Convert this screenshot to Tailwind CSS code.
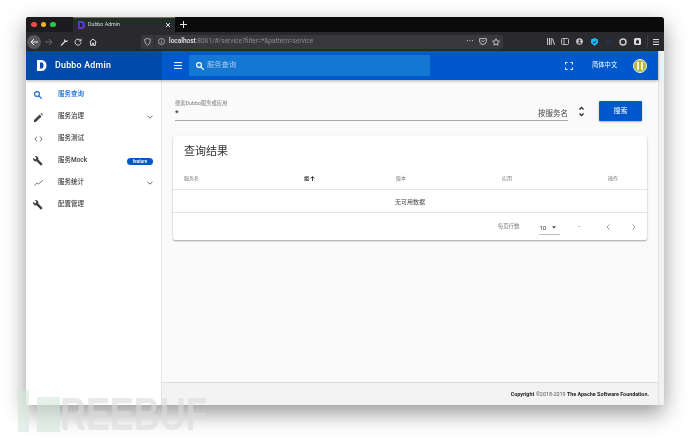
<!DOCTYPE html>
<html lang="zh">
<head>
<meta charset="utf-8">
<script src="https://cdn.jsdelivr.net/npm/@tailwindcss/browser@4"></script>
</head>
<body class="relative w-[690px] h-[439px] overflow-hidden bg-white font-['Roboto','Noto_Sans_CJK_SC',sans-serif]">
<!-- watermark -->
<div class="absolute left-[18px] top-[390px] flex items-start z-20 opacity-60">
  <div class="w-[11px] h-[42px] bg-[#d3e8dc]"></div>
  <div class="ml-[8px] mt-[7px] w-[23px] h-[35px] bg-[#d3e8dc]"></div>
  <div class="text-[46px] leading-[36px] mt-[6px] font-bold scale-x-[0.78] origin-left text-[#dcdcdc] font-['Liberation_Sans',sans-serif]">REEBUF</div>
</div>
<div class="pt-[17px] pl-[26px]">
<div class="relative z-10 w-[638px] h-[388px] flex flex-col overflow-hidden rounded-t-[3px] rounded-b-[2px] shadow-[0_8px_22px_rgba(0,0,0,0.42)] bg-[#f5f5f5] blur-[0.3px]">
  <!-- tab bar -->
  <div class="h-[15px] shrink-0 bg-[#0b0b0c] flex items-stretch">
    <div class="w-[47px] flex items-center gap-[4px] pl-[5px] bg-[#1c1c1e]">
      <span class="w-[5.5px] h-[5.5px] rounded-full bg-[#f0484a]"></span>
      <span class="w-[5.5px] h-[5.5px] rounded-full bg-[#f2b428]"></span>
      <span class="w-[5.5px] h-[5.5px] rounded-full bg-[#2fc53f]"></span>
    </div>
    <div class="w-[102px] bg-[#2a2a2e] border-t border-[#2f7fe0] flex items-center pl-[5px] text-white">
      <svg width="7" height="8" viewBox="0 0 7 8"><path d="M0 0h4a3 4 0 0 1 0 8H0z" fill="#5b35d5"/><path d="M2 2h1.500a1 2 0 0 1 0 4H2z" fill="#1f1f2a"/></svg>
      <span class="ml-[3px] text-[5.3px] leading-none text-[#d8d8d8]">Dubbo Admin</span>
      <svg class="ml-auto mr-[4px]" width="6" height="6" viewBox="0 0 6 6"><path d="M1 1l4 4M5 1L1 5" stroke="#e6e6e6" stroke-width="1"/></svg>
    </div>
    <svg class="ml-[5px] self-center" width="7" height="7" viewBox="0 0 7 7"><path d="M3.500 0v7M0 3.500h7" stroke="#e6e6e6" stroke-width="1"/></svg>
  </div>
  <!-- toolbar -->
  <div class="h-[19px] shrink-0 bg-[#2a2a2e] flex items-center">
    <div class="ml-[1px] w-[14px] h-[14px] rounded-full bg-[#59595c] flex items-center justify-center">
      <svg width="8" height="8" viewBox="0 0 8 8" fill="none" stroke="#eee" stroke-width="1"><path d="M8 4H1M4 1L1 4l3 3"/></svg>
    </div>
    <svg class="ml-[4px]" width="8" height="8" viewBox="0 0 8 8" fill="none" stroke="#6b6b6e" stroke-width="1"><path d="M0 4h7M4 1l3 3-3 3"/></svg>
    <svg class="ml-[7px]" width="8" height="8" viewBox="0 0 8 8" fill="none" stroke="#ddd" stroke-width="1.200"><path d="M1 7.500L5 3.500M4.500 1.500a1.800 1.800 0 0 0 2 2L7.500 2.500"/></svg>
    <svg class="ml-[6px]" width="8" height="8" viewBox="0 0 8 8" fill="none" stroke="#ddd" stroke-width="1"><path d="M6.600 2.600A3 3 0 1 0 7 4.500M7 .8v2.200H4.800"/></svg>
    <svg class="ml-[7px]" width="8" height="8" viewBox="0 0 8 8" fill="none" stroke="#ddd" stroke-width="1"><path d="M.6 4L4 1l3.400 3M1.600 3.600V7.400h1.800V5.200h1.200v2.200h1.800V3.600"/></svg>
    <div class="ml-[44px] w-[362px] h-[14px] rounded-[2px] bg-[#38383d] flex items-center pl-[3px] pr-[3px] text-[6.5px] leading-none">
      <svg width="7" height="8" viewBox="0 0 7 8" fill="none" stroke="#bbb" stroke-width="0.900"><path d="M.7 1.200L3.500.5l2.800.7c0 3-.8 5-2.800 6.200C1.500 6.200.7 4.200.7 1.200z"/></svg>
      <span class="w-px h-[14px] bg-[#2a2a2e] ml-[3px]"></span>
      <svg class="ml-[3px]" width="7" height="7" viewBox="0 0 7 7" fill="none" stroke="#bbb" stroke-width="0.800"><circle cx="3.500" cy="3.500" r="3"/><path d="M3.500 3v2.200M3.500 1.600v.7"/></svg>
      <span class="ml-[4px] text-[#e8e8e8] font-medium">localhost</span><span class="text-[#8d8d90]">:8081/#/service?filter=*&amp;pattern=service</span>
      <span class="ml-auto text-[#ccc] text-[7px] tracking-[0.5px] font-bold mr-[5px]">···</span>
      <svg width="8" height="7" viewBox="0 0 8 7" fill="none" stroke="#ccc" stroke-width="0.900"><path d="M.6.600h6.800v2.500a3.400 3.400 0 0 1-6.800 0zM2.500 2.500L4 3.800l1.500-1.300"/></svg>
      <svg class="ml-[5px]" width="8" height="8" viewBox="0 0 8 8" fill="none" stroke="#ccc" stroke-width="0.900"><path d="M4 .7l1 2.200 2.400.3-1.800 1.600.5 2.400L4 6 1.900 7.200l.5-2.400L.6 3.200 3 2.900z"/></svg>
    </div>
    <svg class="ml-[44px]" width="8" height="7" viewBox="0 0 8 7" fill="none" stroke="#ccc" stroke-width="1"><path d="M.6 0v7M2.500 0v7M4.200 0v7M5.500.500L7.600 7"/></svg>
    <svg class="ml-[6px]" width="8" height="7" viewBox="0 0 8 7" fill="none" stroke="#ccc" stroke-width="0.900"><rect x=".5" y=".5" width="7" height="6" rx="1"/><path d="M3 .5v6"/></svg>
    <svg class="ml-[7px]" width="7" height="7" viewBox="0 0 7 7"><circle cx="3.500" cy="3.500" r="3.300" fill="#ccc"/><circle cx="3.500" cy="2.700" r="1.100" fill="#2a2a2e"/><path d="M1.500 5.600a2 1.500 0 0 1 4 0z" fill="#2a2a2e"/></svg>
    <svg class="ml-[8px]" width="7" height="8" viewBox="0 0 7 8"><path d="M3.500 0L7 1.500V5L3.500 8 0 5V1.500z" fill="#20b8f0"/><path d="M2 4l1.200 1L5 2.800" stroke="#123" fill="none"/></svg>
    <svg class="ml-[7px]" width="8" height="8" viewBox="0 0 8 8"><circle cx="4" cy="4" r="3.500" fill="#263044"/></svg>
    <svg class="ml-[6px]" width="8" height="8" viewBox="0 0 8 8" fill="none" stroke="#ccc" stroke-width="1.500"><circle cx="4" cy="4" r="3"/></svg>
    <svg class="ml-[7px]" width="7" height="7" viewBox="0 0 7 7"><rect width="7" height="7" rx="1.500" fill="#ddd"/><path d="M2 3l1.500-1.500L5 3v2.500H2z" fill="#2a2a2e"/></svg>
    <span class="ml-[6px] w-px h-[14px] bg-[#3c3c40]"></span>
    <svg class="ml-[5px]" width="6" height="6" viewBox="0 0 6 6" stroke="#ddd" stroke-width="1"><path d="M0 .5h6M0 3h6M0 5.500h6"/></svg>
  </div>
  <!-- page -->
  <div class="flex-1 min-h-0 flex">
    <div class="w-[632px] flex flex-col min-h-0">
      <header class="h-[29px] shrink-0 flex relative z-10 bg-[#0059cc] text-white shadow-[0_1px_3px_rgba(0,0,0,0.3)]">
        <div class="w-[136px] bg-[#0049ad] flex items-center pl-[11px]">
          <svg width="10" height="11" viewBox="0 0 10 11"><path fill-rule="evenodd" d="M0 0h4.500a5 5.500 0 0 1 0 11H0zM3 2.500v6h1.500a2 3 0 0 0 0-6z" fill="#fff"/></svg>
          <span class="ml-[8px] text-[8.800px] font-medium tracking-[0.25px]">Dubbo Admin</span>
        </div>
        <svg class="ml-[12px] self-center" width="8" height="7" viewBox="0 0 8 7" stroke="#fff" stroke-width="1"><path d="M0 .6h8M0 3.500h8M0 6.400h8"/></svg>
        <div class="ml-[7px] my-[4px] w-[241px] bg-[#1477d4] flex items-center pl-[7px]">
          <svg width="8" height="8" viewBox="0 0 8 8" fill="none" stroke="#fff" stroke-width="1.200"><circle cx="3" cy="3" r="2.400"/><path d="M4.800 4.800L7.800 7.800"/></svg>
          <span class="ml-[3px] text-[7.300px] text-[#a9cbee]">服务查询</span>
        </div>
        <svg class="ml-[135px] self-center" width="8" height="8" viewBox="0 0 8 8" fill="none" stroke="#fff" stroke-width="1"><path d="M.5 2.500V.5h2M5.500.5h2v2M7.500 5.500v2h-2M2.500 7.500h-2v-2"/></svg>
        <span class="ml-[19px] self-center text-[6.300px]">简体中文</span>
        <div class="ml-[16px] self-center w-[14px] h-[14px] rounded-full bg-[#b9b73a] border border-[#eee] flex justify-center items-center gap-[2px]">
          <span class="w-[2px] h-[8px] bg-[#f0f0e0]"></span><span class="w-[2px] h-[8px] bg-[#f0f0e0]"></span>
        </div>
      </header>
      <div class="flex-1 min-h-0 flex">
        <aside class="w-[136px] shrink-0 bg-white border-r border-[#e3e3e3] flex flex-col pt-[4px] text-[6.500px] text-[#3c3c3c] font-medium">
          <div class="h-[22px] flex items-center pl-[8px] pr-[8px] text-[#0a63cf]">
            <span class="w-[24px]"><svg width="8" height="8" viewBox="0 0 8 8" fill="none" stroke="#0a63cf" stroke-width="1.100"><circle cx="3" cy="3" r="2.400"/><path d="M4.800 4.800L7.800 7.800"/></svg></span>
            <span>服务查询</span>
          </div>
          <div class="h-[22px] flex items-center pl-[8px] pr-[8px]">
            <span class="w-[24px]"><svg width="9" height="9" viewBox="0 0 8 8" fill="#444"><path d="M0 8V6.300L5 1.300 6.700 3 1.700 8zM5.700.6L6.300 0 8 1.700l-.6.600z"/></svg></span>
            <span>服务治理</span>
            <svg class="ml-auto" width="6" height="4" viewBox="0 0 6 4" fill="none" stroke="#555" stroke-width="0.900"><path d="M.5.700L3 3.200 5.500.7"/></svg>
          </div>
          <div class="h-[22px] flex items-center pl-[8px] pr-[8px]">
            <span class="w-[24px]"><svg width="9" height="6" viewBox="0 0 8 6" fill="none" stroke="#555" stroke-width="0.800"><path d="M2.500.500L.5 3l2 2.500M5.500.500l2 2.500-2 2.500"/></svg></span>
            <span>服务测试</span>
          </div>
          <div class="h-[22px] flex items-center pl-[7px] pr-[8px]">
            <span class="w-[25px]"><svg width="10" height="10" viewBox="0 0 10 10" fill="#444"><path d="M.3 1.800L2 3.500l1.500-1.500L1.800.3A2.600 2.600 0 0 1 5.300 3.500L9.700 7.900 8 9.700 3.500 5.300A2.600 2.600 0 0 1 .3 1.800z"/></svg></span>
            <span>服务Mock</span>
            <span class="ml-auto w-[26px] h-[7px] rounded-full bg-[#0059cc] text-white text-[4.500px] leading-[7px] text-center">feature</span>
          </div>
          <div class="h-[22px] flex items-center pl-[8px] pr-[8px]">
            <span class="w-[24px]"><svg width="9" height="6" viewBox="0 0 9 6" fill="none" stroke="#555" stroke-width="0.800"><path d="M.3 5.500L3 3l1.500 1L8.700.5"/></svg></span>
            <span>服务统计</span>
            <svg class="ml-auto" width="6" height="4" viewBox="0 0 6 4" fill="none" stroke="#555" stroke-width="0.900"><path d="M.5.700L3 3.200 5.500.7"/></svg>
          </div>
          <div class="h-[22px] flex items-center pl-[7px] pr-[8px]">
            <span class="w-[25px]"><svg width="10" height="10" viewBox="0 0 10 10" fill="#444"><path d="M.3 1.800L2 3.500l1.500-1.500L1.800.3A2.600 2.600 0 0 1 5.300 3.500L9.700 7.900 8 9.700 3.500 5.300A2.600 2.600 0 0 1 .3 1.800z"/></svg></span>
            <span>配置管理</span>
          </div>
        </aside>
        <div class="flex-1 min-w-0 flex flex-col bg-[#fafafa]">
          <main class="flex-1 min-h-0 px-[11px] pt-[19px]">
            <div class="flex items-start h-[37px]">
              <div class="ml-[2px] w-[393px] h-[22px] border-b border-[#a8a8a8] relative">
                <div class="text-[5.300px] leading-[8px] text-[#777]">搜索Dubbo服务或应用</div>
                <div class="text-[8px] leading-[8px] font-bold text-[#333] mt-[2px]">*</div>
                <span class="absolute right-0 bottom-[1px] text-[7.500px] leading-[10px] text-[#444]">按服务名</span>
              </div>
              <svg class="ml-[11px] mt-[7px]" width="5" height="11" viewBox="0 0 5 11" fill="none" stroke="#222" stroke-width="1.200"><path d="M.5 3.500L2.500 1.300l2 2.200M.5 7.500l2 2.200 2-2.200"/></svg>
              <button class="ml-[15px] mt-[2px] w-[43px] h-[20px] bg-[#0059cc] text-white text-[7px] rounded-[1px] shadow-[0_1px_2px_rgba(0,0,0,0.3)]">搜索</button>
            </div>
            <section class="bg-white rounded-[2px] h-[104px] shadow-[0_1px_2px_rgba(0,0,0,0.35)] flex flex-col">
              <h2 class="h-[31px] pl-[11px] pt-[8px] text-[11px] leading-[15px] text-[#333]">查询结果</h2>
              <div class="h-[23px] pt-[1px] grid grid-cols-[120px_92px_106px_106px_1fr] items-center pl-[11px] text-[5px] text-[#777] border-b border-[#e6e6e6]">
                <span>服务名</span>
                <span class="flex items-center gap-[1px] text-[#222] font-bold">组<svg width="5" height="5" viewBox="0 0 5 5" fill="none" stroke="#222" stroke-width="0.900"><path d="M2.500 5V.7M.6 2.500L2.500.6l1.900 1.900"/></svg></span>
                <span>版本</span>
                <span>应用</span>
                <span>操作</span>
              </div>
              <div class="h-[23px] flex items-center justify-center text-[6px] text-[#444] border-b border-[#e6e6e6]">无可用数据</div>
              <div class="flex-1 flex items-center text-[5.300px] text-[#777] pl-[325px]">
                <span>每页行数:</span>
                <div class="ml-[19px] w-[21px] h-[14px] mt-[2px] border-b border-[#bbb] flex items-center text-[#333] text-[6px]">10
                  <svg class="ml-[6px]" width="4" height="3" viewBox="0 0 4 3"><path d="M0 .3h4L2 2.600z" fill="#444"/></svg>
                </div>
                <span class="ml-[17px]">–</span>
                <svg class="ml-[25px]" width="4" height="6" viewBox="0 0 4 6" fill="none" stroke="#888" stroke-width="0.800"><path d="M3.500.5L1 3l2.500 2.500"/></svg>
                <svg class="ml-[22px]" width="4" height="6" viewBox="0 0 4 6" fill="none" stroke="#888" stroke-width="0.800"><path d="M.5.500L3 3 .5 5.500"/></svg>
              </div>
            </section>
          </main>
          <footer class="h-[23px] shrink-0 bg-[#f3f3f3] border-t border-[#dcdcdc] flex items-center justify-end pr-[9px] text-[5.400px] text-[#222]">
            <span class="font-bold">Copyright</span><span class="text-[#555]">&nbsp;©2018-2019&nbsp;</span><span class="font-bold">The Apache Software Foundation.</span>
          </footer>
        </div>
      </div>
    </div>
    <div class="w-[6px] bg-[#f1f1f1] border-l border-[#e4e4e4]"></div>
  </div>
</div>
</div>
</body>
</html>
